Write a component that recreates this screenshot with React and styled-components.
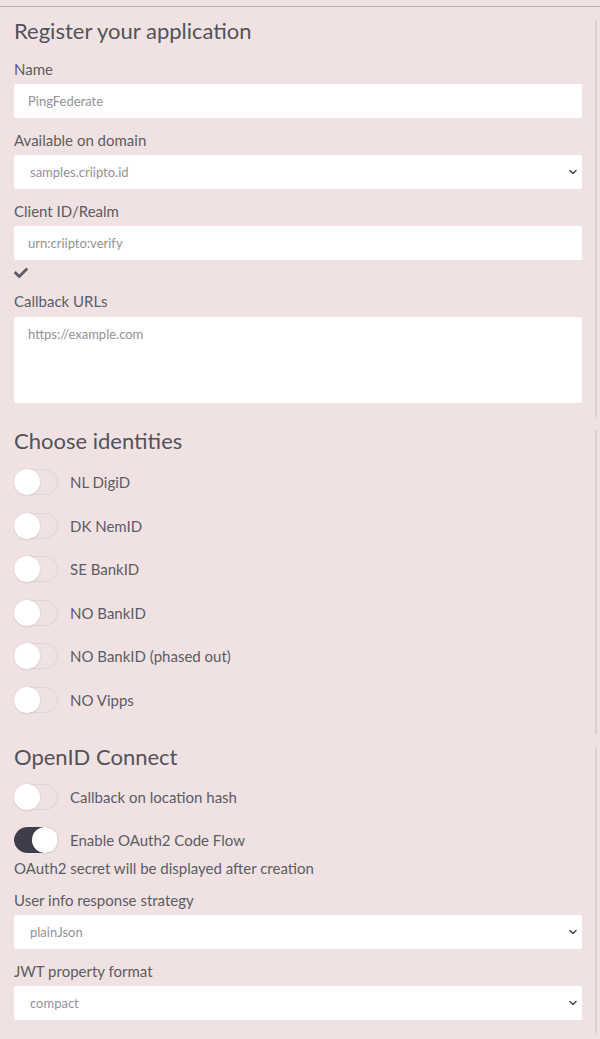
import React from 'react';
import styled, { createGlobalStyle } from 'styled-components';
import { FaCheck } from 'react-icons/fa';
import { ChevronDown } from 'lucide-react';

const GlobalStyle = createGlobalStyle`
  html, body {
    margin: 0;
    padding: 0;
    background: #f0e2e2;
  }
  body {
    font-family: Lato, "Open Sans", sans-serif;
    color: #55555c;
  }
`

//thin line over the top of the page
const TopRule = styled.div`
  margin-top: 6px;
  height: 1px;
  background: #bfb2b3;
`

const Page = styled.div`
  display: flex;
  flex-direction: column;
  padding-top: 13px;
  gap: 13px;
  min-height: 1020px;
`

//each form block, with its faint right edge
const Section = styled.section`
  width: 568px;
  padding: 0 13px ${p => p.bottom || 14}px 14px;
  border-right: 2px solid #ddd0d0;
  display: flex;
  flex-direction: column;
`

const Heading = styled.h2`
  margin: ${p => p.up ? '-2px' : '-1px'} 0 0;
  font-size: 22px;
  line-height: 24px;
  font-weight: 400;
  color: #52525a;
`

const Label = styled.label`
  display: block;
  font-size: 15px;
  line-height: 20px;
  color: #5c5c62;
  margin: ${p => p.first ? '16px' : '12px'} 0 5px;
`

const Input = styled.input`
  box-sizing: border-box;
  width: 100%;
  height: 34px;
  border: none;
  border-radius: 2px;
  background: #fff;
  padding: 0 14px;
  font-family: inherit;
  font-size: 13px;
  color: #929298;
  outline: none;
`

const TextArea = styled.textarea`
  box-sizing: border-box;
  width: 100%;
  height: 86px;
  border: none;
  border-radius: 2px;
  background: #fff;
  padding: 9px 14px;
  font-family: inherit;
  font-size: 13px;
  color: #929298;
  resize: none;
  outline: none;
  margin-top: 1px;
`

const SelectWrap = styled.div`
  position: relative;
  height: 34px;
`

const Select = styled.select`
  appearance: none;
  box-sizing: border-box;
  width: 100%;
  height: 34px;
  border: none;
  border-radius: 2px;
  background: #fff;
  padding: 0 16px;
  font-family: inherit;
  font-size: 13px;
  color: #929298;
  outline: none;
`

const Chevron = styled(ChevronDown)`
  position: absolute;
  right: 3px;
  top: 11px;
  color: #48484f;
  pointer-events: none;
`

const Check = styled.div`
  margin-top: 7px;
  height: 12px;
  color: #5c5c62;
  display: flex;
  align-items: center;
`

const ToggleList = styled.div`
  display: flex;
  flex-direction: column;
  gap: 17.5px;
  margin-top: ${p => p.top || 15}px;
`

const ToggleRow = styled.div`
  display: flex;
  align-items: center;
  gap: 12px;
  height: 26px;
  font-size: 15px;
  color: #5c5c62;
`

const Track = styled.span`
  box-sizing: border-box;
  width: 44px;
  height: 26px;
  border-radius: 13px;
  border: 1px solid ${p => p.on ? '#3e3e4a' : '#e2d5d5'};
  background: ${p => p.on ? '#3e3e4a' : 'transparent'};
  display: flex;
  align-items: center;
  justify-content: ${p => p.on ? 'flex-end' : 'flex-start'};
  flex-shrink: 0;
`

const Knob = styled.span`
  width: 26px;
  height: 26px;
  margin: -1px;
  border-radius: 50%;
  background: #fff;
  box-shadow: 0 0 0 1px rgba(0, 0, 0, 0.03), 0 1px 2px rgba(0, 0, 0, 0.07);
`

const Note = styled.div`
  font-size: 15px;
  line-height: 20px;
  color: #5c5c62;
  margin-top: 5px;
`

const Field = ({ label, first, children }) => (
  <>
    <Label first={first}>{label}</Label>
    {children}
  </>
)

const Dropdown = ({ value }) => (
  <SelectWrap>
    <Select defaultValue={value}>
      <option>{value}</option>
    </Select>
    <Chevron size={12} strokeWidth={3} />
  </SelectWrap>
)

const Toggle = ({ on, label }) => (
  <ToggleRow>
    <Track on={on ? 1 : 0}><Knob /></Track>
    {label}
  </ToggleRow>
)

const identities = ['NL DigiD', 'DK NemID', 'SE BankID', 'NO BankID', 'NO BankID (phased out)', 'NO Vipps'];

export default function App() {
  return (
    <>
      <GlobalStyle />
      <TopRule />
      <Page>
        <Section bottom={14}>
          <Heading>Register your application</Heading>
          <Field label="Name" first>
            <Input defaultValue="PingFederate" />
          </Field>
          <Field label="Available on domain">
            <Dropdown value="samples.criipto.id" />
          </Field>
          <Field label="Client ID/Realm">
            <Input defaultValue="urn:criipto:verify" />
          </Field>
          <Check><FaCheck size={14} /></Check>
          <Label>Callback URLs</Label>
          <TextArea defaultValue="https://example.com" />
        </Section>

        <Section bottom={21}>
          <Heading>Choose identities</Heading>
          <ToggleList top={16}>
            {identities.map(name => <Toggle key={name} label={name} />)}
          </ToggleList>
        </Section>

        <Section bottom={13}>
          <Heading up>OpenID Connect</Heading>
          <ToggleList>
            <Toggle label="Callback on location hash" />
            <Toggle on label="Enable OAuth2 Code Flow" />
          </ToggleList>
          <Note>OAuth2 secret will be displayed after creation</Note>
          <Field label="User info response strategy">
            <Dropdown value="plainJson" />
          </Field>
          <Field label="JWT property format">
            <Dropdown value="compact" />
          </Field>
        </Section>
      </Page>
    </>
  );
}
